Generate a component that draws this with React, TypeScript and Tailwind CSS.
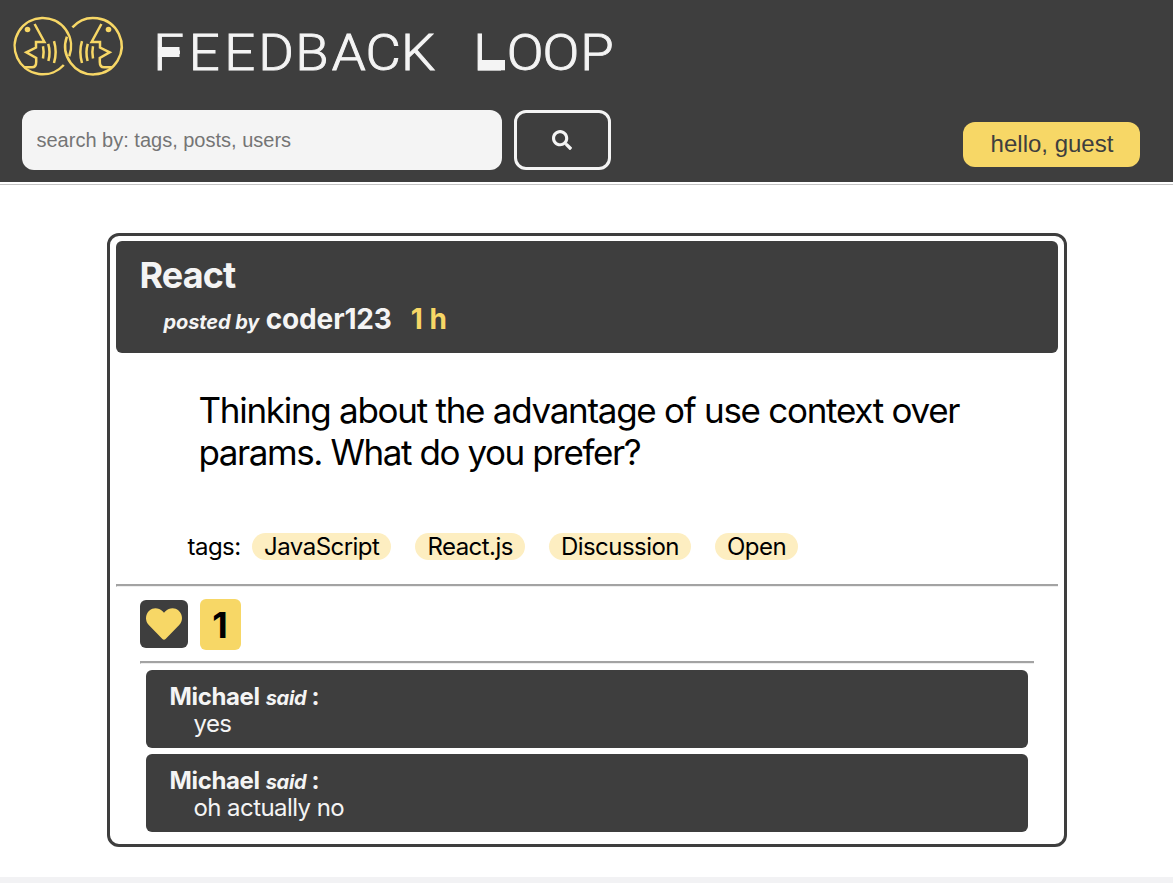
import { FaHeart, FaSearch } from "react-icons/fa";

const tags = ["JavaScript", "React.js", "Discussion", "Open"];
const comments = [
  { author: "Michael", text: "yes" },
  { author: "Michael", text: "oh actually no" },
];

function Logo() {
  return (
    <svg className="h-[90px] w-[140px] shrink-0" viewBox="0 0 140 90" fill="none" stroke="#f7d766" strokeWidth="2.5">
      <path d="M63.8 65A28.2 28.2 0 1 1 69.2 56.2" />
      <path d="M72.4 27.4A28.2 28.2 0 1 1 66.9 36.6" />
      <g id="face">
        <path d="M34.6 24L44.4 42H36V47.5L26.3 52.4L36.2 58V62Q36.2 67.3 32 67.3H24" strokeWidth="2.5" />
        <circle cx="27.5" cy="29.5" r="2.8" fill="#f7d766" stroke="none" />
        <path d="M43 46.3Q44.3 52 43 58.5M48.2 43.8Q50.8 52 48.4 61M54 41.2Q57.3 52 54 63" strokeWidth="2.5" />
      </g>
      <use href="#face" transform="translate(136 0) scale(-1 1)" />
    </svg>
  );
}

function Wordmark() {
  return (
    <svg className="h-[90px] w-[490px]" viewBox="140 0 490 90" fill="#f4f4f4">
      <g transform="scale(1.1 1)">
        <text
          x="139.4 171.6 203.9 234.7 268.3 301.6 332.3 364.6 402 430.2 460.6 493.2 527.4"
          y="69.9"
          fontFamily="Roboto, sans-serif"
          fontWeight="300"
          fontSize="49.4"
          stroke="#f4f4f4"
          strokeWidth="0.9"
        >
          FEEDBACK LOOP
        </text>
      </g>
      <rect x="158" y="47" width="21.5" height="10" />
      <rect x="478" y="60" width="27" height="10.3" />
    </svg>
  );
}

function Rule() {
  return <div className="h-[3px] border-t-2 border-b border-l border-t-[#a3a3a3] border-b-[#eeeeee] border-l-[#a3a3a3]" />;
}

export default function App() {
  return (
    <div className="flex h-[883px] w-[1173px] flex-col overflow-hidden bg-white font-['Inter',sans-serif] text-black">
      <header className="flex h-[185px] shrink-0 flex-col border-b border-[#c4c4c4] bg-[#3e3e3e]">
        <h1 className="flex h-[90px] shrink-0">
          <Logo />
          <Wordmark />
        </h1>
        <div className="flex h-[91.5px] shrink-0 pt-[19.5px] pr-[33px] pl-[21.5px]">
          <input
            className="h-[60px] w-[480px] rounded-xl bg-[#f4f4f4] px-[15px] pt-0.5 font-['Liberation_Sans',sans-serif] text-[20px] text-[#757575] placeholder:text-[#757575]"
            placeholder="search by: tags, posts, users"
          />
          <button className="ml-3 flex h-[60px] w-[97.5px] items-center justify-center rounded-xl border-3 border-[#f4f4f4] text-[#f4f4f4]">
            <FaSearch size={20} />
          </button>
          <button className="mt-3 ml-auto flex h-[45px] w-[177px] items-center justify-center rounded-xl bg-[#f7d766] pl-px font-['Liberation_Sans',sans-serif] text-2xl text-[#3e3e3e]">
            hello, guest
          </button>
        </div>
        <div className="flex-1 bg-white" />
      </header>

      <main className="mx-auto mt-12 flex h-[614px] w-[960px] shrink-0 flex-col rounded-xl border-3 border-[#3e3e3e] px-1.5 pt-[5px]">
        <section className="h-[111.5px] shrink-0 rounded-md bg-[#3e3e3e] pt-[13px] pl-6 font-bold text-[#f4f4f4]">
          <h2 className="text-[36px] leading-[43px] tracking-[-0.9px]">React</h2>
          <div className="flex items-baseline pt-[4px] pl-6 leading-[36px]">
            <em className="text-[20px] tracking-[-0.1px]">posted by</em>
            <span className="ml-[6.5px] text-[28px] tracking-[-0.15px]">coder123</span>
            <span className="ml-[19px] text-[28px] text-[#f7d766]">1 h</span>
          </div>
        </section>
        <p className="mt-[36.5px] h-[143.5px] shrink-0 pl-[83px] text-[35px] leading-[42px]">
          <span className="tracking-[-1.28px]">Thinking about the advantage of use context over</span>
          <br />
          <span className="tracking-[-1.42px]">params. What do you prefer?</span>
        </p>
        <div className="flex h-[51px] shrink-0 items-start pl-[72px] text-2xl leading-[27px] tracking-[-0.53px]">
          <span className="mr-[11.5px]">tags:</span>
          {tags.map((tag) => (
            <span key={tag} className="mr-6 rounded-full bg-[#fdeec1] px-3">
              {tag}
            </span>
          ))}
        </div>
        <Rule />
        <div className="mt-[12px] flex h-[51px] shrink-0 items-center gap-3 pl-6">
          <button className="flex size-12 items-center justify-center rounded-md bg-[#3e3e3e] text-[#f7d766]">
            <FaHeart size={36} />
          </button>
          <span className="flex h-[51px] w-[41px] items-center justify-center rounded-md bg-[#f7d766] pt-0.5 text-[36px] font-bold">1</span>
        </div>
        <div className="mt-[11.5px] px-6">
          <Rule />
          <div className="flex flex-col gap-1.5 px-1.5 pt-[6px]">
            {comments.map((comment) => (
              <article key={comment.text} className="h-[78px] rounded-md bg-[#3e3e3e] pt-[12.5px] pl-6 text-[#f4f4f4]">
                <div className="flex items-baseline font-bold">
                  <span className="text-2xl leading-[28px] tracking-[-0.35px]">{comment.author}</span>
                  <em className="ml-1.5 text-[20px] leading-[20px] tracking-[-0.3px]">said</em>
                  <span className="ml-[5px] text-2xl leading-[28px]">:</span>
                </div>
                <p className="pl-6 text-2xl leading-[26px] tracking-[-0.57px]">{comment.text}</p>
              </article>
            ))}
          </div>
        </div>
      </main>
      <footer className="mt-[30px] h-1.5 shrink-0 bg-[#f2f2f4]" />
    </div>
  );
}
